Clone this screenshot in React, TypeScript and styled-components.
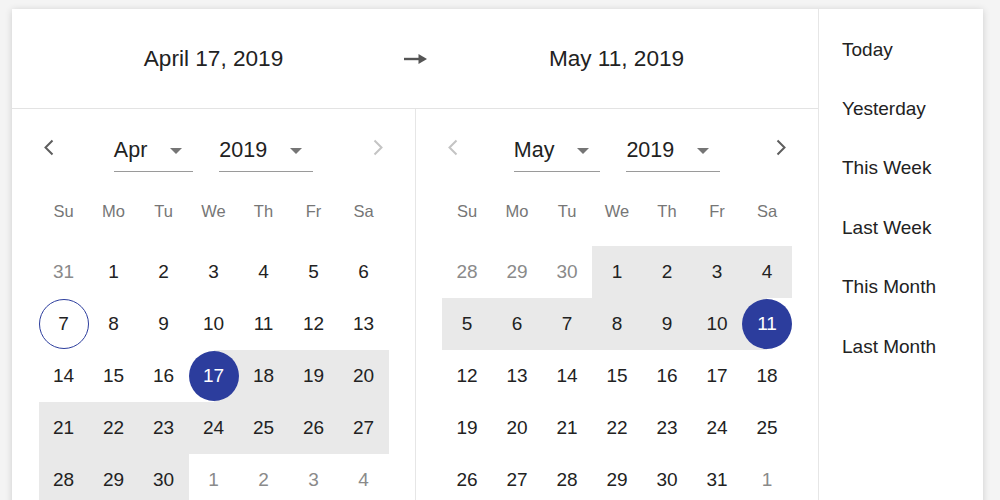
import styled, { createGlobalStyle, css } from "styled-components";

const GlobalStyle = createGlobalStyle`
  html, body {
    margin: 0;
    height: 100%;
    overflow: hidden;
    background: #f4f4f4;
  }
  body {
    font-family: "Liberation Sans", Arial, Helvetica, sans-serif;
    color: #212121;
  }
  #root {
    height: 100%;
  }
`;

const Page = styled.div`
  box-sizing: border-box;
  height: 100%;
  padding: 9px 17px 0 12px;
`;

const Card = styled.div`
  display: flex;
  height: 560px;
  background: #fff;
  box-shadow: 0 1px 7px rgba(0, 0, 0, 0.16);
`;

const Main = styled.div`
  width: 806px;
  display: flex;
  flex-direction: column;
`;

const Header = styled.header`
  height: 99px;
  display: grid;
  grid-template-columns: 1fr 0 1fr;
  align-items: center;
  border-bottom: 1px solid #e3e3e3;
`;

const DateLabel = styled.div`
  text-align: center;
  font-size: 22.6px;
  color: #222;
`;

const ArrowWrap = styled.div`
  width: 0;
  display: flex;
  justify-content: center;
  color: #555;

  svg {
    flex-shrink: 0;
  }
`;

const Panels = styled.div`
  display: flex;
  flex: 1;
`;

const Panel = styled.section<{ $divider?: boolean }>`
  width: ${(p) => (p.$divider ? "403px" : "402px")};
  border-right: ${(p) => (p.$divider ? "1px solid #e6e6e6" : "none")};
`;

const NavRow = styled.div`
  display: flex;
  justify-content: space-between;
  align-items: flex-start;
  padding: 28px 32px 0;
`;

const NavButton = styled.button<{ $disabled?: boolean }>`
  border: 0;
  background: none;
  padding: 0;
  margin-top: 2px;
  width: 10px;
  height: 17px;
  color: ${(p) => (p.$disabled ? "#c4c4c4" : "#5e5e5e")};
  cursor: pointer;
`;

const Selects = styled.div`
  display: flex;
  gap: 26px;
`;

const Select = styled.div`
  display: inline-flex;
  align-items: center;
  font-size: 21.5px;
  line-height: 26px;
  padding-bottom: 8px;
  border-bottom: 1px solid #9a9a9a;
  color: #222;
`;

const Caret = styled.svg`
  margin: 2px 11px 0 23px;
`;

const WeekRow = styled.div`
  display: grid;
  grid-template-columns: repeat(7, 50px);
  justify-content: center;
  margin-top: 29px;
  line-height: 20px;
  font-size: 16.5px;
  color: #767676;
  text-align: center;
`;

const DaysGrid = styled.div`
  display: grid;
  grid-template-columns: repeat(7, 50px);
  grid-auto-rows: 52px;
  justify-content: center;
  margin-top: 25px;
`;

const RANGE = "#e9e9e9";
const ACCENT = "#2c3d9d";

const DayCell = styled.div<{ $range?: "full" | "start" | "end" }>`
  display: flex;
  align-items: center;
  justify-content: center;
  ${(p) =>
    p.$range === "full" &&
    css`
      background: ${RANGE};
    `}
  ${(p) =>
    p.$range === "start" &&
    css`
      background: linear-gradient(to right, transparent 50%, ${RANGE} 50%);
    `}
  ${(p) =>
    p.$range === "end" &&
    css`
      background: linear-gradient(to right, ${RANGE} 50%, transparent 50%);
    `}
`;

const DayNumber = styled.span<{ $outside?: boolean; $selected?: boolean; $ring?: boolean }>`
  box-sizing: border-box;
  width: 50px;
  height: 50px;
  border-radius: 50%;
  display: flex;
  align-items: center;
  justify-content: center;
  font-size: 19px;
  color: ${(p) => (p.$outside ? "#8a8a8a" : "#222")};
  ${(p) =>
    p.$selected &&
    css`
      background: ${ACCENT};
      color: #fff;
    `}
  ${(p) =>
    p.$ring &&
    css`
      border: 1px solid ${ACCENT};
    `}
`;

const Sidebar = styled.aside`
  flex: 1;
  border-left: 1px solid #e6e6e6;
  padding: 11px 0 0 23px;
`;

const Preset = styled.div`
  height: 59.4px;
  display: flex;
  align-items: center;
  font-size: 19px;
  color: #222;
  cursor: pointer;
`;

const MONTHS = ["Jan", "Feb", "Mar", "Apr", "May", "Jun", "Jul", "Aug", "Sep", "Oct", "Nov", "Dec"];
const WEEKDAYS = ["Su", "Mo", "Tu", "We", "Th", "Fr", "Sa"];
const PRESETS = ["Today", "Yesterday", "This Week", "Last Week", "This Month", "Last Month"];

const rangeStart = new Date(2019, 3, 17);
const rangeEnd = new Date(2019, 4, 11);
const ringDay = new Date(2019, 3, 7);

const sameDay = (a: Date, b: Date) =>
  a.getFullYear() === b.getFullYear() && a.getMonth() === b.getMonth() && a.getDate() === b.getDate();

function Chevron({ dir }: { dir: "left" | "right" }) {
  const pts = dir === "left" ? "8.5,1.5 1.5,8.5 8.5,15.5" : "1.5,1.5 8.5,8.5 1.5,15.5";
  return (
    <svg width="10" height="17" viewBox="0 0 10 17">
      <polyline points={pts} fill="none" stroke="currentColor" strokeWidth="2" />
    </svg>
  );
}

function Calendar({ year, month, prevDisabled, nextDisabled, divider }: {
  year: number;
  month: number;
  prevDisabled?: boolean;
  nextDisabled?: boolean;
  divider?: boolean;
}) {
  const first = new Date(year, month, 1);
  const days: Date[] = [];
  for (let i = 0; i < 42; i++) {
    days.push(new Date(year, month, 1 - first.getDay() + i));
  }

  return (
    <Panel $divider={divider}>
      <NavRow>
        <NavButton $disabled={prevDisabled}>
          <Chevron dir="left" />
        </NavButton>
        <Selects>
          <Select>
            {MONTHS[month]}
            <Caret width="12" height="6" viewBox="0 0 12 6">
              <polygon points="0,0 12,0 6,6" fill="#757575" />
            </Caret>
          </Select>
          <Select>
            {year}
            <Caret width="12" height="6" viewBox="0 0 12 6">
              <polygon points="0,0 12,0 6,6" fill="#757575" />
            </Caret>
          </Select>
        </Selects>
        <NavButton $disabled={nextDisabled}>
          <Chevron dir="right" />
        </NavButton>
      </NavRow>
      <WeekRow>
        {WEEKDAYS.map((w) => (
          <div key={w}>{w}</div>
        ))}
      </WeekRow>
      <DaysGrid>
        {days.map((d) => {
          const outside = d.getMonth() !== month;
          const isStart = sameDay(d, rangeStart);
          const isEnd = sameDay(d, rangeEnd);
          let range: "full" | "start" | "end" | undefined;
          if (!outside) {
            if (isStart) range = "start";
            else if (isEnd) range = "end";
            else if (d > rangeStart && d < rangeEnd) range = "full";
          }
          return (
            <DayCell key={d.toISOString()} $range={range}>
              <DayNumber
                $outside={outside}
                $selected={!outside && (isStart || isEnd)}
                $ring={!outside && sameDay(d, ringDay)}
              >
                {d.getDate()}
              </DayNumber>
            </DayCell>
          );
        })}
      </DaysGrid>
    </Panel>
  );
}

export default function App() {
  return (
    <Page>
      <GlobalStyle />
      <Card>
        <Main>
          <Header>
            <DateLabel>April 17, 2019</DateLabel>
            <ArrowWrap>
              <svg width="23" height="12" viewBox="0 0 23 12">
                <line x1="0" y1="6" x2="16" y2="6" stroke="currentColor" strokeWidth="2.4" />
                <polygon points="14.5,1 23,6 14.5,11" fill="currentColor" />
              </svg>
            </ArrowWrap>
            <DateLabel>May 11, 2019</DateLabel>
          </Header>
          <Panels>
            <Calendar year={2019} month={3} nextDisabled divider />
            <Calendar year={2019} month={4} prevDisabled />
          </Panels>
        </Main>
        <Sidebar>
          {PRESETS.map((p) => (
            <Preset key={p}>{p}</Preset>
          ))}
        </Sidebar>
      </Card>
    </Page>
  );
}
